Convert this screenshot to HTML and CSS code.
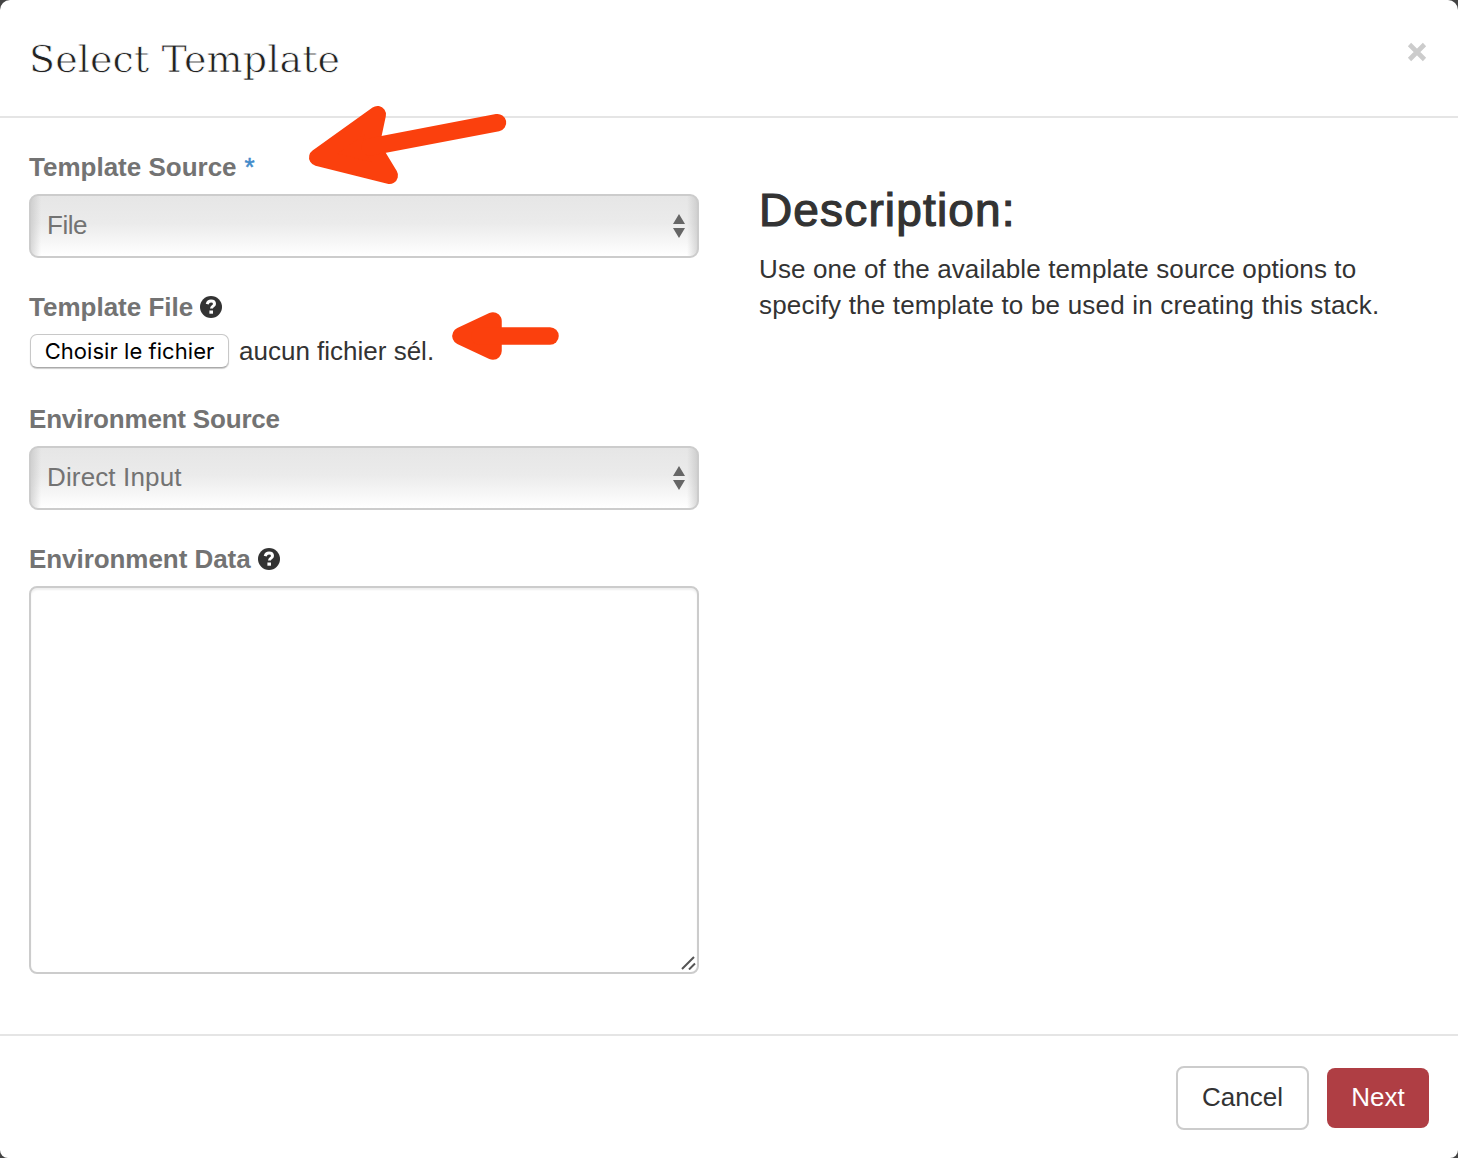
FILE: index.html
```html
<!DOCTYPE html>
<html lang="en">
<head>
<meta charset="utf-8">
<title>Select Template</title>
<link rel="stylesheet" href="styles.css">
</head>
<body>
<div class="modal">
  <header class="modal-header">
    <h1 class="title">Select Template</h1>
    <button class="close" aria-label="Close"><svg width="20" height="20" viewBox="0 0 20 20"><path d="M2.5 2.5 17.5 17.5M17.5 2.5 2.5 17.5" stroke="#ccc" stroke-width="4.6"/></svg></button>
  </header>
  <main class="modal-body">
    <form class="form">
      <div class="field">
        <div class="label"><span>Template Source</span><span class="required">*</span></div>
        <div class="select"><span class="value-file">File</span><svg class="arrows" width="12" height="24" viewBox="0 0 12 24"><path d="M6 0 12 10H0ZM0 14H12L6 24Z" fill="#666"/></svg></div>
      </div>
      <div class="field">
        <div class="label"><span>Template File</span><svg class="help" width="22" height="22" viewBox="0 0 22 22"><circle cx="11" cy="11" r="11" fill="#333"/><path d="M7.2 8.1C7.9 5.7 9.2 5.1 11 5.1c2.2 0 3.5 1.2 3.5 2.8 0 2.2-3 2.2-3 4.5" fill="none" stroke="#fff" stroke-width="3"/><path d="M9.4 14.5h3.6v3.2H9.4z" fill="#fff"/></svg></div>
        <div class="file-row"><button type="button" class="file-button">Choisir le fichier</button><span>aucun fichier sél.</span></div>
      </div>
      <div class="field">
        <div class="label"><span class="env-source">Environment Source</span></div>
        <div class="select"><span class="value-direct">Direct Input</span><svg class="arrows" width="12" height="24" viewBox="0 0 12 24"><path d="M6 0 12 10H0ZM0 14H12L6 24Z" fill="#666"/></svg></div>
      </div>
      <div class="field">
        <div class="label"><span class="env-data">Environment Data</span><svg class="help" width="22" height="22" viewBox="0 0 22 22"><circle cx="11" cy="11" r="11" fill="#333"/><path d="M7.2 8.1C7.9 5.7 9.2 5.1 11 5.1c2.2 0 3.5 1.2 3.5 2.8 0 2.2-3 2.2-3 4.5" fill="none" stroke="#fff" stroke-width="3"/><path d="M9.4 14.5h3.6v3.2H9.4z" fill="#fff"/></svg></div>
        <div class="textarea"><svg width="15" height="14" viewBox="0 0 15 14"><path d="M1 13 13 1M8 13.5 14 7.5" stroke="#555" stroke-width="2"/></svg></div>
      </div>
    </form>
    <section class="description">
      <h2 class="heading">Description:</h2>
      <p class="text"><span class="line1">Use one of the available template source options to</span><br><span class="line2">specify the template to be used in creating this stack.</span></p>
    </section>
  </main>
  <footer class="modal-footer">
    <button class="button cancel">Cancel</button>
    <button class="button next">Next</button>
  </footer>
  <svg class="marks" width="1458" height="1158" viewBox="0 0 1458 1158" fill="#fb400d" stroke="#fb400d" stroke-linejoin="round" stroke-linecap="round">
    <path d="M317.500 157.500 377.500 114.500 371 145 389.500 175.500Z" stroke-width="17"/>
    <path d="M370 147 497.500 122.700" stroke-width="17.500"/>
    <path d="M461 336 493 321V351Z" stroke-width="17.500"/>
    <path d="M480 336H550" stroke-width="17.500"/>
  </svg>
</div>
</body>
</html>
```
FILE: styles.css
```css
* { box-sizing: border-box; }
body { margin: 0; background: #444; font: 26px/36px "Liberation Sans", Arial, sans-serif; color: #333; }
button { font: inherit; margin: 0; padding: 0; }
svg { display: block; flex: none; }
.modal { position: relative; width: 1458px; height: 1158px; background: #fff; border-radius: 10px 10px 8px 8px; overflow: hidden; }
.modal-header { display: flex; justify-content: space-between; align-items: flex-start; height: 118px; padding: 30px 31px 0 29px; border-bottom: 2px solid #e5e5e5; }
.title { margin: 0; padding-top: 1px; font: 400 38px/56px "DejaVu Serif", serif; white-space: nowrap; -webkit-text-stroke: .75px #fff; color: #222; letter-spacing: .1px; }
.close { margin-top: 12px; border: 0; background: none; }
.modal-body { display: grid; grid-template-columns: 670px 1fr; gap: 60px; height: 916px; padding: 30px 29px 0; }
.form { display: flex; flex-direction: column; gap: 30px; }
.field { display: flex; flex-direction: column; gap: 10px; }
.label { display: flex; align-items: center; height: 36px; padding-top: 2px; font-weight: 700; color: #737373; white-space: nowrap; }
.required { margin-left: 8px; color: #428bca; font-weight: 400; -webkit-text-stroke: .5px #428bca; }
.help { margin-left: 7px; }
.env-source { letter-spacing: -.19px; }
.env-data { letter-spacing: -.06px; }
.select { display: flex; justify-content: space-between; align-items: center; height: 64px; padding: 0 12px 2px 16px; border: 2px solid #ccc; border-radius: 9px; color: #737373; background: linear-gradient(to right, #bbb8 0, #ddd0 10px, #ddd0 calc(100% - 10px), #bbb8 100%), linear-gradient(#e6e6e6, #ebebeb 45%, #fff); }
.value-file { letter-spacing: -.5px; }
.value-direct { letter-spacing: .14px; }
.arrows { position: relative; top: 1px; }
.file-row { display: flex; align-items: center; gap: 10px; height: 36px; padding-bottom: 2px; white-space: nowrap; }
.file-button { width: 199px; height: 34px; margin-left: 1px; border: 1px solid #c8c8c8; border-bottom-color: #aaa; border-radius: 7px; background: #fff; color: #000; font: 22px/32px Inter, sans-serif; letter-spacing: .05px; box-shadow: 0 1px 1px #ccc; }
.file-row span { margin-left: -1px; padding-left: 1px; }
.textarea { display: flex; justify-content: flex-end; align-items: flex-end; height: 388px; padding: 0 1px 2px; border: 2px solid #ccc; border-radius: 8px; box-shadow: inset 0 2px 2px #0001; }
.description { padding-top: 36px; white-space: nowrap; }
.heading { margin: 0 0 15px; font-size: 46px; line-height: 52px; font-weight: 400; letter-spacing: 1.15px; -webkit-text-stroke: 1.2px #333; }
.text { margin: 0; }
.line1 { letter-spacing: .12px; }
.line2 { letter-spacing: .19px; }
.modal-footer { display: flex; justify-content: flex-end; align-items: center; gap: 18px; height: 124px; padding: 2px 29px 0 0; border-top: 2px solid #e5e5e5; }
.button { padding-bottom: 2px; border-radius: 8px; font-size: 26px; }
.cancel { width: 133px; height: 64px; border: 2px solid #ccc; background: #fff; color: #333; }
.next { width: 102px; height: 60px; border: 0; background: #af3e44; color: #fff; }
.marks { position: absolute; left: 0; top: 0; pointer-events: none; }
```
